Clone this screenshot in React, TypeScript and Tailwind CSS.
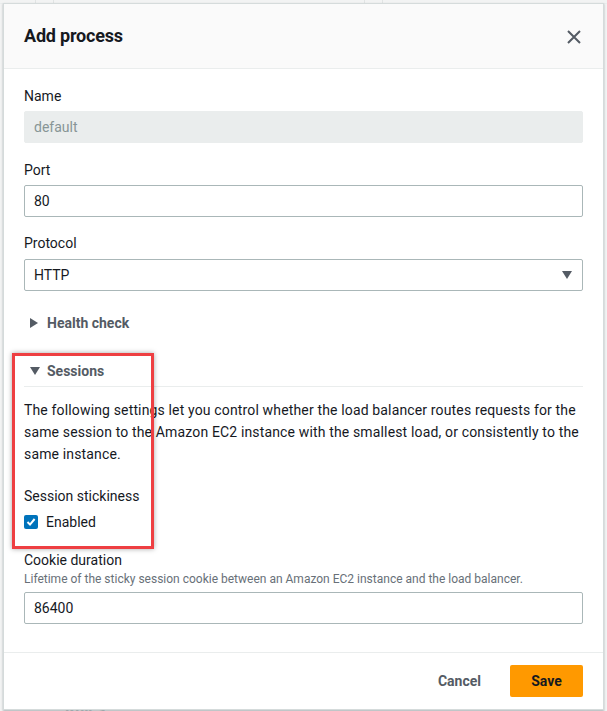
import React from "react";

const font = { fontFamily: "Roboto, 'Noto Sans', Arial, sans-serif" };

function Label({ children }: { children: React.ReactNode }) {
  return <div className="text-[14px] leading-[22px] text-[#16191f]">{children}</div>;
}

export default function App() {
  return (
    <div className="relative w-[607px] h-[711px] overflow-hidden bg-[#f2f3f3]" style={font}>
      {/* background page peeking */}
      <div className="absolute inset-0 flex flex-col">
        <div className="flex h-[4px] border-b border-[#eaeded]">
          <div className="w-[36px] border-r border-[#e1e4e4]" />
          <div className="w-[18px] border-r border-[#e1e4e4]" />
          <div className="w-[311px] border-r border-[#e1e4e4]" />
          <div className="w-[18px] border-r border-[#e1e4e4]" />
          <div className="flex-1" />
        </div>
        <div className="flex-1" />
        <div className="pl-[65px] text-[16px] font-bold leading-[20px] text-[#c6cdce] -mb-[8px]">Rules</div>
      </div>

      {/* modal */}
      <div className="absolute left-[3px] top-[3px] w-[601px] h-[707px] bg-white border border-[#d5dbdb] shadow-[0_1px_2px_rgba(0,28,36,0.3)] flex flex-col">
        <div className="h-[65px] shrink-0 bg-[#fafafa] border-b border-[#eaeded] flex items-center justify-between pl-[20px] pr-[21px]">
          <div className="text-[18px] font-bold text-[#16191f] leading-[22px] tracking-[-0.2px]">Add process</div>
          <svg width="16" height="16" viewBox="0 0 16 16" className="mt-[1px]">
            <path d="M2 2 L14 14 M14 2 L2 14" stroke="#545b64" strokeWidth="2" fill="none" />
          </svg>
        </div>

        <div className="flex-1 px-[20px] pt-[16px]">
          <Label>Name</Label>
          <div className="mt-[4px] h-[32px] rounded-[2px] bg-[#eaeded] border border-[#eaeded] flex items-center px-[9px] text-[14px] text-[#879596]">
            default
          </div>

          <div className="mt-[16px]">
            <Label>Port</Label>
          </div>
          <div className="mt-[4px] h-[32px] rounded-[2px] bg-white border border-[#aab7b8] flex items-center px-[9px] text-[14px] text-[#16191f]">
            80
          </div>

          <div className="mt-[15px]">
            <Label>Protocol</Label>
          </div>
          <div className="mt-[5px] h-[32px] rounded-[2px] bg-white border border-[#aab7b8] flex items-center justify-between pl-[9px] pr-[10px] text-[14px] text-[#16191f]">
            <span>HTTP</span>
            <svg width="10" height="8" viewBox="0 0 10 8">
              <path d="M0 0 H10 L5 8 Z" fill="#545b64" />
            </svg>
          </div>

          <div className="mt-[21px] flex items-center h-[22px]">
            <svg width="8" height="10" viewBox="0 0 8 10" className="ml-[6px] mr-[9px]">
              <path d="M0 0 L8 5 L0 10 Z" fill="#545b64" />
            </svg>
            <span className="text-[14px] font-bold text-[#545b64]">Health check</span>
          </div>

          <div className="mt-[26px] flex items-center h-[22px]">
            <svg width="10" height="8" viewBox="0 0 10 8" className="ml-[6px] mr-[7px]">
              <path d="M0 0 H10 L5 8 Z" fill="#545b64" />
            </svg>
            <span className="text-[14px] font-bold text-[#545b64]">Sessions</span>
          </div>
          <div className="mt-[4px] border-t border-[#eaeded]" />

          <p className="mt-[12px] text-[14px] leading-[22px] text-[#16191f] tracking-[0.15px]">
            The following settings let you control whether the load balancer routes requests for the same session to the Amazon EC2 instance with the smallest load, or consistently to the same instance.
          </p>

          <div className="mt-[20px]">
            <Label>Session stickiness</Label>
          </div>
          <div className="mt-[4px] flex items-center h-[22px]">
            <div className="w-[14px] h-[14px] rounded-[2px] bg-[#0073bb] flex items-center justify-center mr-[8px]">
              <svg width="10" height="10" viewBox="0 0 10 10">
                <path d="M1.5 5 L4 7.6 L8.6 2" stroke="white" strokeWidth="2" fill="none" />
              </svg>
            </div>
            <span className="text-[14px] text-[#16191f]">Enabled</span>
          </div>

          <div className="mt-[16px]">
            <Label>Cookie duration</Label>
          </div>
          <div className="text-[12px] leading-[16px] text-[#687078]">
            Lifetime of the sticky session cookie between an Amazon EC2 instance and the load balancer.
          </div>
          <div className="mt-[5px] h-[32px] rounded-[2px] bg-white border border-[#aab7b8] flex items-center px-[9px] text-[14px] text-[#16191f]">
            86400
          </div>
        </div>

        <div className="h-[57px] shrink-0 border-t border-[#eaeded] flex items-center justify-end gap-[29px] pr-[20px]">
          <span className="text-[14px] font-bold text-[#545b64]">Cancel</span>
          <div className="h-[32px] w-[73px] rounded-[2px] bg-[#ff9900] flex items-center justify-center text-[14px] font-bold text-[#16191f]">
            Save
          </div>
        </div>
      </div>

      {/* annotation highlight */}
      <div className="absolute left-[12px] top-[353px] w-[142px] h-[196px] border-[3px] border-[#ee3f42] shadow-[0_0_5px_rgba(0,0,0,0.35)]" />
    </div>
  );
}
